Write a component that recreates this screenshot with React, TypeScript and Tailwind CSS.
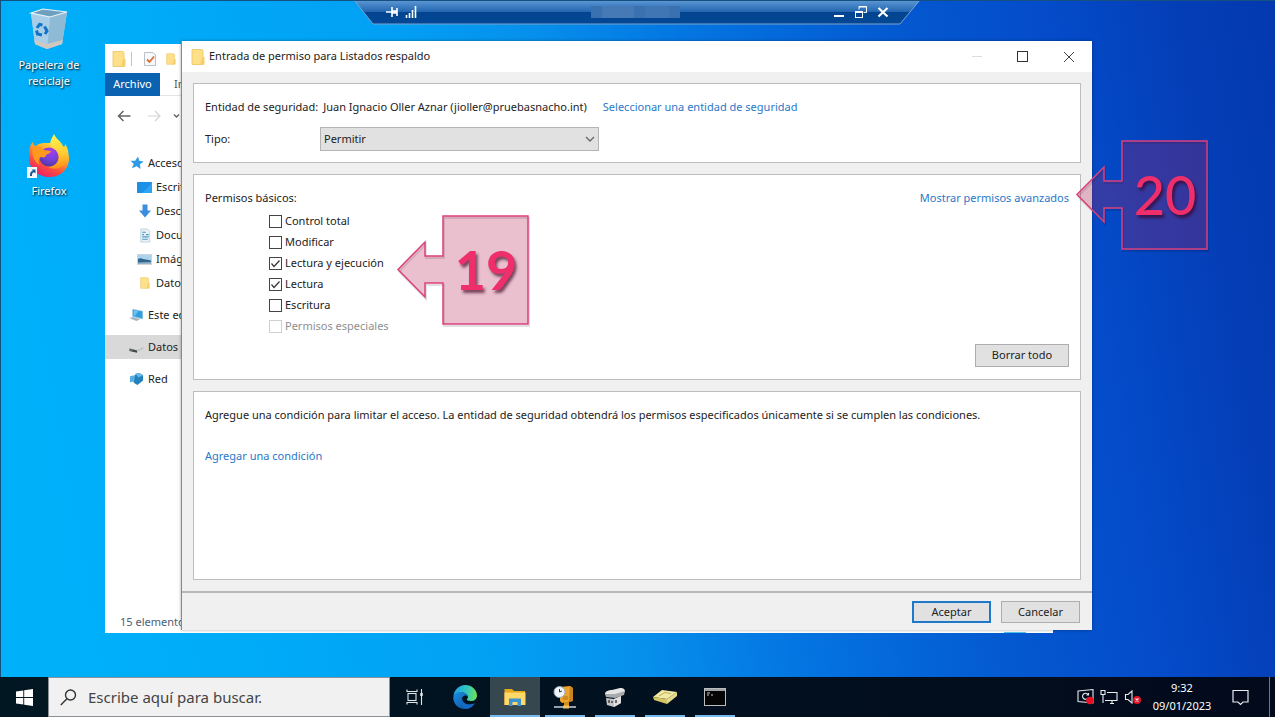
import { type ReactNode, useState } from 'react';
import clsx from 'clsx';

type IconProps = { className?: string };

const RecycleBinIcon = () => (
  <svg viewBox="0 0 42 46" className="h-[46px] w-[42px]" aria-hidden="true">
    <path d="M3 6 L15 2 L39 5 L34 37 L19 42 L7 37 Z" fill="#b9d9ec" />
    <path d="M3 6 L22 10 L19 42 L7 37 Z" fill="#a9cfe8" />
    <path d="M22 10 L39 5 L34 37 L19 42 Z" fill="#8fbad6" />
    <path d="M3 6 L15 2 L39 5 L22 10 Z" fill="#6f9fbe" stroke="#e6f3fa" strokeWidth="1.2" />
    <path d="M6.500 33 L19 37 L34.500 33 L34 37 L19 42 L7 37 Z" fill="#cfc8c0" />
    <g fill="none" stroke="#1173c9" strokeWidth="3">
      <path d="M9 21 L11.500 17.500 L14.500 18" />
      <path d="M16.500 19.500 L19 24 L17 27" />
      <path d="M14 28 L9.500 27 L8.500 23.500" />
    </g>
  </svg>
);

const FirefoxIcon = () => (
  <svg viewBox="0 0 44 46" className="h-[46px] w-[44px]" aria-hidden="true">
    <defs>
      <linearGradient id="ff-body" x1="0.8" y1="0" x2="0.2" y2="1">
        <stop offset="0" stopColor="#fff44f" />
        <stop offset="0.35" stopColor="#ffa52c" />
        <stop offset="0.65" stopColor="#ff4f3d" />
        <stop offset="1" stopColor="#e5156e" />
      </linearGradient>
      <radialGradient id="ff-globe" cx="0.6" cy="0.2" r="0.9">
        <stop offset="0" stopColor="#a63df0" />
        <stop offset="0.5" stopColor="#7542d8" />
        <stop offset="1" stopColor="#43349c" />
      </radialGradient>
      <linearGradient id="ff-flame" x1="0.5" y1="0" x2="0.6" y2="1">
        <stop offset="0" stopColor="#fff44f" />
        <stop offset="0.6" stopColor="#ffc932" />
        <stop offset="1" stopColor="#ff8a16" />
      </linearGradient>
    </defs>
    <path
      d="M3 14 C4 11 5 10 6 9 C6 12 8 13 9 13 C12 10 16 10 18 10 L30 10 C37 13 43 20 42 27 C41 37 33 44 23 44 C11 44 2 36 2 25 C2 21 2 17 3 14 Z"
      fill="url(#ff-body)"
    />
    <circle cx="22" cy="24" r="9.500" fill="url(#ff-globe)" />
    <path
      d="M27 1 C25 5 22 9 24 13 C26 16 31 17 32 22 C33 29 28 34 21 34 C28 38 37 35 40 28 C43 21 41 15 38 11 C38 14 37 14 36 13 C34 8 29 6 27 1 Z"
      fill="url(#ff-flame)"
    />
    <path d="M6 15 C11 12 15 14 17 17 L24 18 C23 21 20 21 19 22 C19 24 17 25 14 24 C11 25 11 29 13 32 C7 29 4 21 6 15 Z" fill="#ff9a1f" />
    <rect x="0" y="34" width="10" height="11" fill="#f4f8fc" />
    <path d="M3 43 C3 39 4 38 6 38 L4.500 36.500 H8.500 V40.500 L7 39.300 C5 39.500 5 41 5 43 Z" fill="#16549c" />
  </svg>
);

const FolderIcon = ({ className }: IconProps) => (
  <svg viewBox="0 0 14 16" className={className} aria-hidden="true">
    <path d="M1 0.500 H11 L12 2 V15.500 H1 Z" fill="#ffe08a" stroke="#eec45c" strokeWidth="0.8" />
    <path d="M11 8 H13.500 V15.500 H9 Z" fill="#f7d06c" />
  </svg>
);

const PropertiesIcon = () => (
  <svg viewBox="0 0 14 16" className="h-[16px] w-[14px]" aria-hidden="true">
    <path d="M1.500 1.500 H10 L12.500 4 V14.500 H1.500 Z" fill="#f7f9fb" stroke="#b9c0c8" />
    <path d="M4 8.500 L6.500 11 L11 5.500" fill="none" stroke="#e2693a" strokeWidth="1.800" />
  </svg>
);

const StarIcon = () => (
  <svg viewBox="0 0 14 14" className="h-[14px] w-[14px]" aria-hidden="true">
    <path d="M8 0.500 L9.300 4.700 L13.700 5.400 L10 8.200 L10.500 13 L6.700 10.200 L1.800 12.300 L3.800 7.900 L0.500 4.800 L5.200 4.800 Z" fill="#2f9be8" />
  </svg>
);

const DesktopIcon = () => (
  <svg viewBox="0 0 15 11" className="h-[11px] w-[15px]" aria-hidden="true">
    <rect width="15" height="11" rx="0.500" fill="#1c8fe6" />
    <path d="M5 11 L15 1 V11 Z" fill="#2ea4f3" />
  </svg>
);

const DownloadIcon = () => (
  <svg viewBox="0 0 14 14" className="h-[14px] w-[14px]" aria-hidden="true">
    <path d="M4.500 0.500 H9.500 V6.500 H13 L7 13.500 L1 6.500 H4.500 Z" fill="#3b8ede" />
  </svg>
);

const DocumentIcon = () => (
  <svg viewBox="0 0 14 16" className="h-[15px] w-[14px]" aria-hidden="true">
    <path d="M2.500 1 H9.500 L12 3.500 V15 H2.500 Z" fill="#e9f1f7" stroke="#b7c7d4" strokeWidth="0.800" />
    <path d="M4 4.500 H8 M4 7 H6 M8 7 H11 M4 9.500 H11 M4 12 H10" stroke="#4d9ac8" strokeWidth="1.200" />
  </svg>
);

const PictureIcon = () => (
  <svg viewBox="0 0 15 11" className="h-[11px] w-[15px]" aria-hidden="true">
    <rect x="0.500" y="0.500" width="14" height="10" fill="#a9d3ee" stroke="#cdd6dc" />
    <path d="M1 5 C4 3 7 6 9 5.500 L14 6.500 V10 H1 Z" fill="#32658c" />
    <path d="M1 8.500 L14 8 V10 H1 Z" fill="#8fb2c8" />
  </svg>
);

const ComputerIcon = () => (
  <svg viewBox="0 0 16 14" className="h-[14px] w-[16px]" aria-hidden="true">
    <path d="M4 1 L14.500 3 V11 L4 8.500 Z" fill="#2f9fe2" stroke="#89bcd8" strokeWidth="0.800" />
    <path d="M5 2 L10 3 L6 8 L5 7.800 Z" fill="#6cc3f2" />
    <path d="M0.500 10.500 L4 9 L12 11.500 L8 13.500 Z" fill="#a5b6c2" />
  </svg>
);

const DriveIcon = () => (
  <svg viewBox="0 0 16 10" className="mt-1 h-[10px] w-[16px]" aria-hidden="true">
    <path d="M0.500 4 L9 6 L15.500 2.500 V4.500 L8.500 8.500 L0.500 6.500 Z" fill="#bfc4c6" />
    <path d="M0.500 4.500 L8.500 6.500 V9 L0.500 7 Z" fill="#43494d" />
    <rect x="1.500" y="5.500" width="2" height="1" fill="#6cc070" />
  </svg>
);

const NetworkIcon = () => (
  <svg viewBox="0 0 16 14" className="h-[14px] w-[16px]" aria-hidden="true">
    <path d="M1 4 L8 2.500 V9.500 L1 10.500 Z" fill="#58aee0" />
    <path d="M7 1.500 L11 0.500 L15 3 V8.500 L9 13.500 L5 11 Z" fill="#2381bd" />
    <path d="M7 1.500 L11 0.500 L15 3 L10 5.500 Z" fill="#69b9e6" />
  </svg>
);

type TreeItem = { label: string; icon: ReactNode; nested?: boolean; selected?: boolean };

const quickAccess: TreeItem[] = [
  { label: 'Acceso rápido', icon: <StarIcon /> },
  { label: 'Escritorio', icon: <DesktopIcon />, nested: true },
  { label: 'Descargas', icon: <DownloadIcon />, nested: true },
  { label: 'Documentos', icon: <DocumentIcon />, nested: true },
  { label: 'Imágenes', icon: <PictureIcon />, nested: true },
  { label: 'Datos', icon: <FolderIcon className="h-[14px] w-[10px]" />, nested: true },
];

const places: TreeItem[] = [
  { label: 'Este equipo', icon: <ComputerIcon /> },
  { label: 'Datos', icon: <DriveIcon />, selected: true },
  { label: 'Red', icon: <NetworkIcon /> },
];

function TreeRow({ item }: { item: TreeItem }) {
  return (
    <li
      className={clsx(
        'flex h-6 items-center gap-1 text-[11px] text-[#222]',
        item.nested ? 'pl-8' : 'pl-6',
        item.selected && 'bg-[#d9d9d9]'
      )}
    >
      <span className="flex w-[15px] justify-center">{item.icon}</span>
      <span className="whitespace-nowrap">{item.label}</span>
    </li>
  );
}

function ExplorerWindow() {
  return (
    <section className="absolute left-[105px] top-[44px] flex h-[589px] w-[948px] flex-col bg-white">
      <div className="flex h-[29px] items-center pl-[7px]">
        <FolderIcon className="h-[16px] w-[14px]" />
        <span className="ml-[5px] h-[14px] w-px bg-[#c4c4c4]" />
        <span className="ml-[11px]"><PropertiesIcon /></span>
        <FolderIcon className="ml-[9px] h-[12px] w-[10px]" />
      </div>
      <div className="flex h-[23px] border-b border-[#e4e4e4] text-[11px]">
        <button className="h-[23px] w-[55px] bg-[#0a62b0] text-white">Archivo</button>
        <button className="px-[14px] text-[#555]">Inicio</button>
      </div>
      <div className="flex h-10 items-center pl-3">
        <svg viewBox="0 0 66 14" className="h-[14px] w-[66px]" fill="none" aria-hidden="true">
          <path d="M13.500 7 H1.500 M6.500 2 L1.500 7 L6.500 12" stroke="#666" strokeWidth="1.500" />
          <path d="M31 7 H43 M38 2 L43 7 L38 12" stroke="#d4d4d4" strokeWidth="1.200" />
          <path d="M57 5.500 L59.500 8 L62 5.500" stroke="#666" strokeWidth="1.500" />
        </svg>
      </div>
      <ul className="pt-[15px]">
        {quickAccess.map((item) => (
          <TreeRow key={item.label} item={item} />
        ))}
      </ul>
      <ul className="flex flex-col gap-2 pt-2">
        {places.map((item) => (
          <TreeRow key={item.label} item={item} />
        ))}
      </ul>
      <p className="mt-auto pb-[2px] pl-[15px] text-[11px] text-[#4c6076]">15 elementos</p>
      <span className="ml-auto mr-[27px] h-px w-[22px] bg-[#4fc3f0]" />
    </section>
  );
}

const initialPermissions = [
  { id: 'full', label: 'Control total', checked: false },
  { id: 'modify', label: 'Modificar', checked: false },
  { id: 'read-exec', label: 'Lectura y ejecución', checked: true },
  { id: 'read', label: 'Lectura', checked: true },
  { id: 'write', label: 'Escritura', checked: false },
  { id: 'special', label: 'Permisos especiales', checked: false, disabled: true },
];

function PermissionDialog() {
  const [permissions, setPermissions] = useState(initialPermissions);

  const toggle = (id: string) => {
    setPermissions((list) => list.map((p) => (p.id === id ? { ...p, checked: !p.checked } : p)));
  };

  const clearAll = () => {
    setPermissions((list) => list.map((p) => ({ ...p, checked: false })));
  };

  return (
    <section className="absolute left-[181px] top-[41px] flex h-[589px] w-[911px] flex-col border-l border-[#8a8a8a] bg-[#f0f0f0] text-[11px] text-[#222] shadow-[0_0_3px_rgba(0,0,0,0.35)]">
      <header className="flex h-[31px] shrink-0 items-center bg-white pl-[9px]">
        <FolderIcon className="h-[16px] w-[14px]" />
        <h1 className="ml-1">Entrada de permiso para Listados respaldo</h1>
        <div className="ml-auto flex items-center">
          <button aria-label="Minimizar" disabled className="flex w-[46px] justify-center">
            <svg viewBox="0 0 12 12" className="h-3 w-3"><path d="M1 5.500 H11" stroke="#dcdcdc" /></svg>
          </button>
          <button aria-label="Maximizar" className="flex w-[46px] justify-center">
            <svg viewBox="0 0 12 12" className="h-3 w-3"><rect x="0.500" y="0.500" width="10" height="10" fill="none" stroke="#333" /></svg>
          </button>
          <button aria-label="Cerrar" className="flex w-[46px] justify-center">
            <svg viewBox="0 0 12 12" className="h-3 w-3"><path d="M1 1 L11 11 M11 1 L1 11" stroke="#444" /></svg>
          </button>
        </div>
      </header>

      <div className="flex flex-1 flex-col gap-[11px] p-[11px]">
        <div className="flex h-20 flex-col gap-2 border border-[#bdbdbd] bg-white pl-[11px] pt-[11px]">
          <div className="flex h-6 items-center">
            <span>Entidad de seguridad:</span>
            <span className="ml-[5px]">Juan Ignacio Oller Aznar (jioller@pruebasnacho.int)</span>
            <a href="#entidad" className="ml-4 text-[#2a78c8]">Seleccionar una entidad de seguridad</a>
          </div>
          <div className="flex h-6 items-center">
            <label htmlFor="tipo" className="w-[115px]">Tipo:</label>
            <div className="relative">
              <select
                id="tipo"
                defaultValue="Permitir"
                className="h-6 w-[279px] appearance-none border border-[#b4b4b4] bg-[#e1e1e1] pl-[3px]"
              >
                <option>Permitir</option>
                <option>Denegar</option>
              </select>
              <svg viewBox="0 0 10 6" className="pointer-events-none absolute right-1 top-[9px] h-[6px] w-[10px]" aria-hidden="true">
                <path d="M1 1 L5 5 L9 1" fill="none" stroke="#666" strokeWidth="1.300" />
              </svg>
            </div>
          </div>
        </div>

        <div className="flex h-[206px] flex-col border border-[#bdbdbd] bg-white pb-3 pl-[11px] pr-[11px] pt-[13px]">
          <div className="flex h-[20px] items-center justify-between">
            <span>Permisos básicos:</span>
            <a href="#avanzados" className="text-[#2a78c8]">Mostrar permisos avanzados</a>
          </div>
          <ul className="pl-16 pt-[3px]">
            {permissions.map((p) => (
              <li key={p.id}>
                <label className={clsx('flex h-[21px] items-center gap-[3px]', p.disabled && 'text-[#8f8f8f]')}>
                  <span className="relative flex">
                    <input
                      type="checkbox"
                      checked={p.checked}
                      disabled={p.disabled}
                      onChange={() => toggle(p.id)}
                      className="peer h-[13px] w-[13px] appearance-none border border-[#444] bg-white disabled:border-[#d0d0d0]"
                    />
                    <svg viewBox="0 0 13 13" className="pointer-events-none absolute inset-0 hidden peer-checked:block" aria-hidden="true">
                      <path d="M2.500 6.500 L5 9.500 L10.500 3.500" fill="none" stroke="#333" strokeWidth="1.200" />
                    </svg>
                  </span>
                  {p.label}
                </label>
              </li>
            ))}
          </ul>
          <button onClick={clearAll} className="ml-auto mt-auto h-[23px] w-[94px] border border-[#adadad] bg-[#e1e1e1]">
            Borrar todo
          </button>
        </div>

        <div className="flex flex-1 flex-col items-start gap-[21px] border border-[#bdbdbd] bg-white pl-[11px] pt-[13px] leading-5">
          <p>
            Agregue una condición para limitar el acceso. La entidad de seguridad obtendrá los permisos especificados únicamente si se cumplen las condiciones.
          </p>
          <a href="#condicion" className="text-[#2a78c8]">Agregar una condición</a>
        </div>
      </div>

      <footer className="flex h-[39px] shrink-0 justify-end gap-[10px] border-t-2 border-[#b8b8b8] pr-3 pt-2">
        <button className="h-[22px] w-[79px] border-2 border-[#1f78c8] bg-[#e1e1e1]">Aceptar</button>
        <button className="h-[22px] w-[79px] border border-[#adadad] bg-[#e1e1e1]">Cancelar</button>
      </footer>
    </section>
  );
}

function ConnectionBar() {
  return (
    <div className="absolute left-[354px] top-0 h-[25px] w-[566px]">
      <svg viewBox="0 0 566 25" className="absolute inset-0 h-[25px] w-[566px]" aria-hidden="true">
        <defs>
          <linearGradient id="bar" x1="0" y1="0" x2="0" y2="1">
            <stop offset="0" stopColor="#5f99d6" />
            <stop offset="0.500" stopColor="#2265b0" />
            <stop offset="0.510" stopColor="#02448f" />
            <stop offset="1" stopColor="#044896" />
          </linearGradient>
        </defs>
        <path d="M0 0 H566 L546 24 H19 Z" fill="url(#bar)" />
        <path d="M0 0 L19 24 H546 L566 0" fill="none" stroke="#7aa3cc" strokeWidth="1" />
        <path d="M0 0.500 H566" stroke="#17406e" />
        <rect x="237" y="6" width="89" height="12" fill="#3a71b0" />
        <rect x="248" y="6" width="32" height="12" fill="#457ab6" />
        <rect x="291" y="6" width="24" height="12" fill="#4176b4" />
        <g stroke="#fff" fill="none" strokeWidth="1.600">
          <path d="M32 12 H37 M38 7 V17 M37 12 H43 M43 8 V16" />
          <path d="M38 11 H43 M38 13 H43" />
          <path d="M52.500 18 V15 M55.500 18 V13 M58.500 18 V10 M61.500 18 V6" strokeWidth="1.600" />
        </g>
      </svg>
      <div className="relative flex h-6 items-center justify-end gap-[10px] pr-[31px] text-white">
        <button aria-label="Minimizar conexión">
          <svg viewBox="0 0 12 12" className="h-3 w-3"><path d="M1 10 H11" stroke="currentColor" strokeWidth="2" /></svg>
        </button>
        <button aria-label="Restaurar conexión">
          <svg viewBox="0 0 12 12" className="h-3 w-3" fill="none" stroke="currentColor">
            <path d="M4 3.500 V0.500 H11.500 V6.500 H8.500" />
            <path d="M4 1 H11.500" />
            <rect x="0.500" y="5.500" width="7" height="6" />
            <path d="M0.500 6.500 H7.500" />
          </svg>
        </button>
        <button aria-label="Cerrar conexión">
          <svg viewBox="0 0 12 12" className="h-3 w-3"><path d="M1.500 2 L10.500 10.500 M10.500 2 L1.500 10.500" stroke="currentColor" strokeWidth="2.200" /></svg>
        </button>
      </div>
    </div>
  );
}

const calloutPath = 'M1 54.500 L28 27 V41 H46 V1 H131 V109 H46 V68 H28 V82 Z';

function Callout({ step, className }: { step: number; className: string }) {
  return (
    <div className={clsx('absolute h-[110px] w-[132px]', className)}>
      <svg viewBox="0 0 132 110" className="absolute inset-0 h-[110px] w-[132px] overflow-visible" aria-hidden="true">
        <path d={calloutPath} transform="translate(1 2)" fill="none" stroke="#000" strokeOpacity="0.120" strokeWidth="2" />
        <path d={calloutPath} fill="#b51c54" fillOpacity="0.280" stroke="#dc3f7c" strokeWidth="1.500" />
      </svg>
      <span
        className={clsx(
          'relative flex h-[110px] items-center justify-center pl-[46px] font-[Lato] text-[54px] leading-none text-[#ee2f6c] [text-shadow:2px_3px_3px_rgba(60,0,30,0.65)]',
          step === 19 ? 'font-bold' : 'font-medium'
        )}
      >
        {step}
      </span>
    </div>
  );
}

const TaskViewIcon = () => (
  <svg viewBox="0 0 20 18" className="h-[18px] w-5" fill="none" stroke="#dfe6ea" strokeWidth="1.100" aria-hidden="true">
    <path d="M2 1.500 V3.500 H12 V1.500 M2 16.500 V14.500 H12 V16.500" />
    <rect x="3" y="5.500" width="8" height="7" />
    <path d="M16.500 1 V17" />
    <path d="M16.500 5 V8" strokeWidth="2.500" />
  </svg>
);

const EdgeIcon = () => (
  <svg viewBox="0 0 24 24" className="h-6 w-6" aria-hidden="true">
    <defs>
      <linearGradient id="edge-top" x1="0" y1="0.400" x2="1" y2="0.500">
        <stop offset="0" stopColor="#1f9fe0" />
        <stop offset="0.500" stopColor="#2fc3c8" />
        <stop offset="1" stopColor="#6ae05a" />
      </linearGradient>
      <linearGradient id="edge-low" x1="0" y1="0" x2="1" y2="1">
        <stop offset="0" stopColor="#1b8fe0" />
        <stop offset="1" stopColor="#0d4a9c" />
      </linearGradient>
    </defs>
    <path d="M0.500 11 C1 5 6 0 12 0 C19 0 24 5 24 10.500 C24 14 21.500 16 18 16 C15 16 13.500 15 14 14 C15 13 15 12 15 11.500 C14 8 10 7 7 7.500 C4 8 1.500 9.500 0.500 11 Z" fill="url(#edge-top)" />
    <path d="M0.300 12 C1 8.500 5 6.500 8.500 7 C12.500 7.300 15 10 14.900 12 C13 9.500 9.500 10.500 9 13.500 C8.500 18 14 21.500 21.500 18.500 C19 22.500 15 24 12 24 C5 24 0 18.500 0.300 12 Z" fill="url(#edge-low)" />
    <path d="M9 13 C6 17 9 22 13 23.800 C17 23.800 20 21.500 21.800 18.500 C15 21.500 9 18 9 13 Z" fill="#1469c2" />
  </svg>
);

const FilesIcon = () => (
  <svg viewBox="0 0 22 18" className="h-[18px] w-[22px]" aria-hidden="true">
    <path d="M0.500 1 H8 L10 3 H21 V17 H0.500 Z" fill="#e9a91c" />
    <rect x="0.500" y="4.500" width="21" height="12.500" fill="#ffd867" />
    <path d="M5 18 V10.500 H17 V18 H13.500 V14 H8.500 V18 Z" fill="#3f92d0" />
  </svg>
);

const ServerClockIcon = () => (
  <svg viewBox="0 0 24 24" className="h-6 w-6" aria-hidden="true">
    <path d="M7 2 L17 1 L20 3 V16 L9 18 L7 16 Z" fill="#eda42c" />
    <path d="M17 1 L20 3 V16 L16 17 Z" fill="#c98420" />
    <path d="M10 12 H15 M10 14 H15" stroke="#b5731a" />
    <path d="M11 17 H16 V21 H11 Z" fill="#d38d1d" />
    <path d="M1 22 H23" stroke="#c7d3dc" strokeWidth="1.500" />
    <rect x="10" y="20.500" width="6" height="3" fill="#f2c35c" />
    <circle cx="6.500" cy="7" r="5.500" fill="#eef4f8" stroke="#9caab5" />
    <path d="M6.500 4 V7 L9 6" fill="none" stroke="#333" />
  </svg>
);

const ToolboxIcon = () => (
  <svg viewBox="0 0 24 22" className="h-[22px] w-6" aria-hidden="true">
    <path d="M2 8 C2 5 6 4 9 4 L17 2 C20 1.500 22 3 22 5 L20 8 L12 11 Z" fill="#e5e5e5" />
    <path d="M2 8 L12 8 L22 5 L21 9 L12 12 L3 11 Z" fill="#a8aaac" />
    <path d="M3 12 L11 13 L18 10 V17 L11 21 L4 19 Z" fill="#c4c6c8" />
    <path d="M11 13 L18 10 V17 L11 21 Z" fill="#e0e0e0" />
    <path d="M6 14 V17 M9 15 V17 M13 14 V17" stroke="#444" strokeWidth="1.500" />
  </svg>
);

const DiskIcon = () => (
  <svg viewBox="0 0 26 18" className="h-[18px] w-[26px]" aria-hidden="true">
    <path d="M1 9 L10 2 L25 4 L15 11 Z" fill="#f2e9a4" />
    <path d="M1 9 L15 11 V16 L2 12 Z" fill="#d3c563" />
    <path d="M15 11 L25 4 V8 L15 16 Z" fill="#e6da8a" />
    <path d="M7 8 L13 4.500 L19 5.500" fill="none" stroke="#bfae58" />
  </svg>
);

const ConsoleIcon = () => (
  <svg viewBox="0 0 22 18" className="h-[18px] w-[22px]" aria-hidden="true">
    <rect x="0.500" y="0.500" width="21" height="17" fill="#050505" stroke="#b9bdc0" />
    <path d="M1 2 H21" stroke="#d6d9db" strokeWidth="1.500" />
    <path d="M3 5 H6 M3 7 H5 M7 7 H9" stroke="#ccc" />
  </svg>
);

const apps = [
  { name: 'Vista de tareas', icon: <TaskViewIcon /> },
  { name: 'Microsoft Edge', icon: <EdgeIcon /> },
  { name: 'Explorador de archivos', icon: <FilesIcon />, running: true, active: true },
  { name: 'Programador', icon: <ServerClockIcon />, running: true },
  { name: 'Administrador del servidor', icon: <ToolboxIcon />, running: true },
  { name: 'Discos', icon: <DiskIcon />, running: true },
  { name: 'Símbolo del sistema', icon: <ConsoleIcon />, running: true },
];

function Taskbar() {
  return (
    <footer className="flex h-10 shrink-0 items-center bg-linear-to-r from-[#011722] to-[#020a1c] text-white">
      <button aria-label="Inicio" className="flex h-10 w-12 items-center justify-center">
        <svg viewBox="0 0 17 17" className="h-[17px] w-[17px]" fill="#fff" aria-hidden="true">
          <path d="M0 2.500 L7.300 1.400 V8 H0 Z M8.200 1.300 L17 0 V8 H8.200 Z M0 9 H7.300 V15.600 L0 14.500 Z M8.200 9 H17 V17 L8.200 15.700 Z" />
        </svg>
      </button>
      <label className="flex h-10 w-[342px] items-center gap-[11px] border border-[#8b9196] bg-[#f1f1f1] pl-[11px]">
        <svg viewBox="0 0 17 17" className="h-[17px] w-[17px]" fill="none" stroke="#333" strokeWidth="1.400" aria-hidden="true">
          <circle cx="10.500" cy="6" r="5" />
          <path d="M7 9.800 L0.800 16" />
        </svg>
        <input
          type="text"
          aria-label="Buscar"
          placeholder="Escribe aquí para buscar."
          className="min-w-0 flex-1 bg-transparent text-[15px] text-[#444] outline-none placeholder:text-[#444]"
        />
      </label>
      <nav className="flex">
        {apps.map((app) => (
          <button
            key={app.name}
            aria-label={app.name}
            className={clsx('relative flex h-10 w-[50px] items-center justify-center', app.active && 'bg-[#37474f]')}
          >
            {app.icon}
            {app.running && (
              <span className={clsx('absolute bottom-0 h-[2px] bg-[#76b9ed]', app.active ? 'inset-x-0' : 'inset-x-[5px]')} />
            )}
          </button>
        ))}
      </nav>
      <div className="ml-auto flex items-center">
        <svg viewBox="0 0 66 18" className="h-[18px] w-[66px]" fill="none" stroke="#e8ecef" strokeWidth="1.100" aria-hidden="true">
          <path d="M2 3 L17 1.500 V15 L2 13.500 Z" />
          <path d="M12 6.500 A3 3 0 1 0 12 10 M12.500 5 V7 H10.500" />
          <circle cx="14" cy="12.500" r="3.800" fill="#e81123" stroke="none" />
          <path d="M31 4.500 H41 V12.500 H29 M34 15.500 H38 M36 12.500 V15.500 M25 2.500 H29 V6.500 H25 Z M27 6.500 V15" />
          <path d="M49.500 6.500 H52 L56 3 V15 L52 11.500 H49.500 Z" />
          <circle cx="61" cy="12" r="4" fill="#e81123" stroke="none" />
          <path d="M59.500 10.500 L62.500 13.500 M62.500 10.500 L59.500 13.500" />
        </svg>
        <div className="ml-[6px] w-[68px] text-center text-[11px] leading-[18px]">
          <p>9:32</p>
          <p>09/01/2023</p>
        </div>
        <button aria-label="Notificaciones" className="ml-4">
          <svg viewBox="0 0 17 17" className="h-[17px] w-[17px]" fill="none" stroke="#e8ecef" strokeWidth="1.200">
            <path d="M1 1.500 H16 V13 H11 L8.500 15.500 L6 13 H1 Z" />
          </svg>
        </button>
        <span className="ml-5 mr-[5px] h-10 w-px bg-[#6d7884]" />
      </div>
    </footer>
  );
}

export default function App() {
  return (
    <div className="flex h-screen flex-col overflow-hidden bg-white pb-[6px] pr-[5px] font-['Noto_Sans','Open_Sans',sans-serif]">
      <main className="relative flex-1 overflow-hidden border-l border-t border-[#16507f] bg-[linear-gradient(80deg,#00b2f9_0%,#00aaf8_20%,#02a0f4_36%,#0690ec_46%,#0476e2_57%,#0458d0_73%,#044ccb_83%,#043eb6_93%,#0439b0_100%)]">
        <ul className="relative flex w-24 flex-col items-center text-center text-[11px] leading-4 text-white [text-shadow:1px_1px_2px_#000]">
          <li className="flex h-[127px] flex-col items-center gap-1 pt-[6px]">
            <RecycleBinIcon />
            <span className="w-20">Papelera de reciclaje</span>
          </li>
          <li className="flex flex-col items-center gap-1 pt-[5px]">
            <FirefoxIcon />
            <span>Firefox</span>
          </li>
        </ul>
        {/* windows are placed from the inner edge of the desktop border */}
        <div className="absolute -left-px -top-px">
          <ConnectionBar />
          <ExplorerWindow />
          <PermissionDialog />
          <Callout step={19} className="left-[397px] top-[215px]" />
          <Callout step={20} className="left-[1076px] top-[140px]" />
        </div>
      </main>
      <Taskbar />
    </div>
  );
}
